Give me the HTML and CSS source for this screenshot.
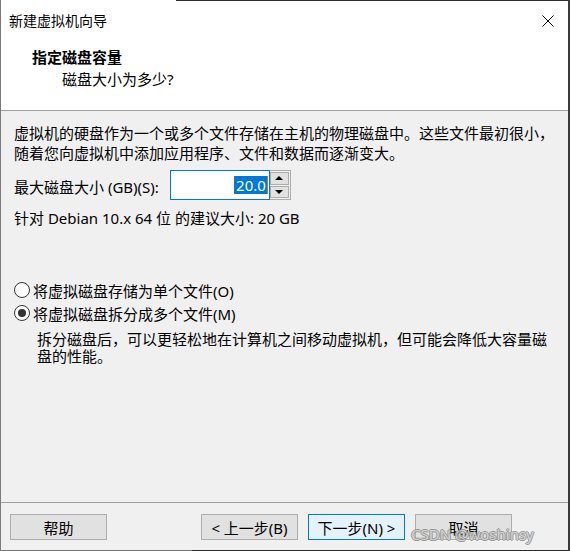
FILE: index.html
```html
<!DOCTYPE html>
<html lang="zh-CN">
  <head>
    <meta charset="UTF-8" />
    <title>新建虚拟机向导</title>
    <link rel="stylesheet" href="styles.css">
  </head>
  <body>
    <div class="window">
      <div class="edgeTop"></div>
      <div class="header">
        <div class="titleBar">
          <div class="title">新建虚拟机向导</div>
          <svg class="close" width="12" height="12" viewBox="0 0 12 12">
            <path d="M0.5 0.5 L11.5 11.5 M11.5 0.5 L0.5 11.5" stroke="#000" stroke-width="1" fill="none" />
          </svg>
        </div>
        <div class="step">指定磁盘容量</div>
        <div class="question">磁盘大小为多少?</div>
      </div>

      <div class="content">
        <div class="text">
          虚拟机的硬盘作为一个或多个文件存储在主机的物理磁盘中。这些文件最初很小，<br />
          随着您向虚拟机中添加应用程序、文件和数据而逐渐变大。
        </div>
        <div class="sizeRow">
          <div class="label">最大磁盘大小 (GB)(S):</div>
          <div class="spin">
            <div class="field"><span class="selected">20.0</span></div>
            <div class="arrows">
              <div class="arrow"><span class="up"></span></div>
              <div class="arrow"><span class="down"></span></div>
            </div>
          </div>
        </div>
        <div class="hint">针对 Debian 10.x 64 位 的建议大小: 20 GB</div>

        <div class="options">
          <div class="option">
            <span class="radio"></span>
            <span>将虚拟磁盘存储为单个文件(O)</span>
          </div>
          <div class="option">
            <span class="radio checked"></span>
            <span>将虚拟磁盘拆分成多个文件(M)</span>
          </div>
          <div class="note">
            拆分磁盘后，可以更轻松地在计算机之间移动虚拟机，但可能会降低大容量磁<br />
            盘的性能。
          </div>
        </div>
      </div>

      <div class="footer">
        <div class="btn">帮助</div>
        <div class="spacer"></div>
        <div class="btn">&lt; 上一步(B)</div>
        <div class="btn default">下一步(N) &gt;</div>
        <div class="btn">取消</div>
        <div class="mark">CSDN @woshinsy</div>
      </div>
      <div class="edgeBottom"></div>
    </div>
  </body>
</html>
```

FILE: styles.css
```css
* {
  box-sizing: border-box;
}
body {
  margin: 0;
  font-family: "Noto Sans", "Noto Sans CJK SC", sans-serif;
  font-size: 15px;
  color: #000;
}
.window {
  display: flex;
  flex-direction: column;
  width: 570px;
  height: 551px;
  background: #f0f0f0;
  border-left: 1px solid #7a7a7a;
  border-right: 2px solid #3a3a3a;
}
.edgeTop {
  height: 1px;
  background: linear-gradient(to right, #fff 175px, #2e2e2e 175px);
}
.edgeBottom {
  height: 1px;
  background: linear-gradient(to right, #777 191px, #2b2b2b 191px);
}
.header {
  height: 110px;
  background: #fff;
  border-bottom: 1px solid #a0a0a0;
}
.titleBar {
  display: flex;
  align-items: center;
  justify-content: space-between;
  height: 38px;
  padding: 0 14px 8px 8px;
}
.title {
  font-size: 14px;
  line-height: 20px;
  padding-top: 10px;
}
.close {
  margin-top: 9px;
}
.step {
  padding-left: 31px;
  font-weight: bold;
  line-height: 20px;
  margin-top: 8px;
}
.question {
  padding-left: 61px;
  line-height: 20px;
  margin-top: 2px;
}
.content {
  flex: 1;
  padding: 12px 14px 0 13px;
}
.text {
  line-height: 20px;
}
.sizeRow {
  display: flex;
  align-items: center;
  gap: 11px;
  margin-top: 7px;
  height: 30px;
}
.label {
  padding-top: 3px;
}
.spin {
  display: flex;
  height: 30px;
}
.field {
  display: flex;
  align-items: center;
  justify-content: flex-end;
  width: 100px;
  height: 30px;
  background: #fff;
  border: 1px solid #0078d7;
  padding-right: 1px;
}
.selected {
  background: #0078d7;
  color: #fff;
  font-size: 15px;
  line-height: 18px;
  padding: 0 1px 0 2px;
  border-right: 1px solid #c87a1e;
}
.arrows {
  display: flex;
  flex-direction: column;
  width: 21px;
  border: 1px solid #adadad;
  border-left: none;
  padding: 1px 1px 1px 0;
  gap: 1px;
  background: #f0f0f0;
}
.arrow {
  flex: 1;
  display: flex;
  align-items: center;
  justify-content: center;
  background: #e1e1e1;
  border: 1px solid #adadad;
}
.up {
  border-left: 4px solid transparent;
  border-right: 4px solid transparent;
  border-bottom: 4px solid #000;
}
.down {
  border-left: 4px solid transparent;
  border-right: 4px solid transparent;
  border-top: 4px solid #000;
}
.hint {
  line-height: 20px;
  margin-top: 8px;
}
.options {
  margin-top: 52px;
}
.option {
  display: flex;
  align-items: center;
  gap: 3px;
  height: 20px;
  margin-bottom: 3px;
}
.radio {
  display: flex;
  align-items: center;
  justify-content: center;
  width: 16px;
  height: 16px;
  border: 1px solid #333;
  border-radius: 50%;
  background: #fff;
}
.radio.checked::after {
  content: "";
  width: 8px;
  height: 8px;
  border-radius: 50%;
  background: #333;
}
.note {
  padding-left: 23px;
  font-family: "Liberation Sans", "Noto Sans CJK SC", sans-serif;
  line-height: 17px;
  margin-top: 8px;
}
.footer {
  position: relative;
  display: flex;
  gap: 10px;
  height: 48px;
  padding: 11px 0 0 9px;
  border-top: 1px solid #a0a0a0;
  padding-right: 56px;
}
.spacer {
  flex: 1;
}
.btn {
  display: flex;
  align-items: center;
  justify-content: center;
  width: 97px;
  height: 26px;
  background: #e1e1e1;
  border: 1px solid #adadad;
}
.btn.default {
  background: #e5f1fb;
  border-color: #0078d7;
}
.mark {
  position: absolute;
  left: 410px;
  top: 21px;
  font-size: 15px;
  color: #d2d2d2;
  text-shadow: 1px 0 0 #8c8c8c, -1px 0 0 #8c8c8c, 0 1px 0 #8c8c8c, 0 -1px 0 #8c8c8c;
  opacity: 0.85;
}
```
